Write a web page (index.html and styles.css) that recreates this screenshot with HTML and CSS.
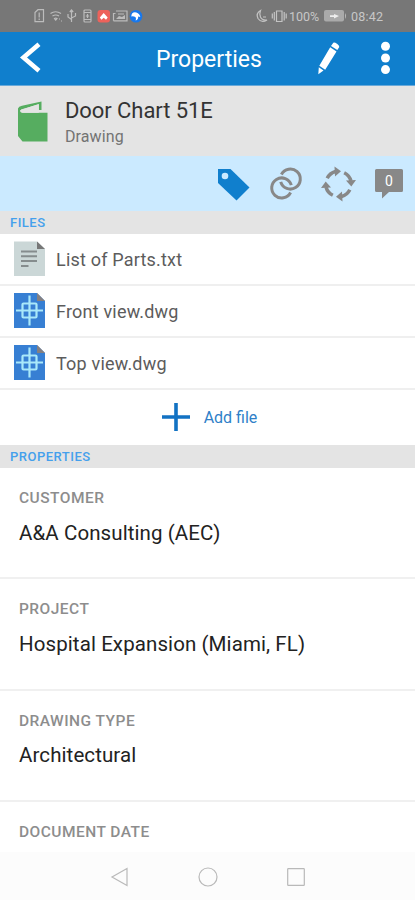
FILE: index.html
```html
<!DOCTYPE html>
<html lang="en">
<head>
<meta charset="utf-8">
<title>Properties</title>
<link rel="stylesheet" href="styles.css">
</head>
<body>
<div class="screen">
  <div class="status">
    <svg class="status-left" width="110" height="16" viewBox="0 0 110 16" fill="none" stroke="#bcbcbc" stroke-width="1.2">
      <path d="M1 4.500 4 1.700h5.500v12H1zM5.200 4.500v5M5.200 10.500v1.500"/>
      <path d="M16.500 5.500q5-3.500 10.500 0M18.500 8q3.200-2 6.500 0M20.500 10.500q1.200-1 2.500 0L21.700 12zM25 11h1M27 13h1"/>
      <path d="M37.500 2v12M35.800 4l1.700-2 1.700 2M34 6v3l3.500 2.500M41.500 5v3L37.500 10"/>
      <rect x="50" y="2" width="7" height="12" rx="1"/><path d="M50 4.500h7M50 11.500h7M53.500 6v4M51.800 8h3.400"/>
      <g stroke="none"><rect x="63.5" y="2" width="12.5" height="12.5" rx="3" fill="#ed625b"/><path d="M65.800 9.500 69.700 5l4 4.500-1.700 2.200-2.300-2-2.200 2z" fill="#fff"/></g>
      <path d="M79.500 12.800V5.500h2M82 3h11v9.800H79.500M84 6h6"/>
      <path d="M82 11l3-3 3 1 3-2v4z" fill="#bcbcbc" stroke="none"/>
      <g stroke="none"><circle cx="102" cy="8.2" r="6.3" fill="#1878ec"/><path d="M97.300 8.500q.3-5 5-4 3.500 1 4 4.500l-2.200-.5q.5 3-2.500 4 1-3-.8-3.800-1.500-.8-3.500-.2z" fill="#fff"/></g>
    </svg>
    <div class="status-right">
      <svg width="31" height="16" viewBox="0 0 31 16" fill="none" stroke="#c4c4c4" stroke-width="1.2"><path d="M4.500 2.600Q-.5 5.500 2 10.500q3.500 5 9 1.500-5 .6-6.500-3-1.200-3.500 0-6.400zM7 9h3"/><path d="M20.500 3h5.500v10.500h-5.500zM18.300 4v8.500M28.200 4v8.500M16.300 5.500v5M30.200 5.500v5"/></svg>
      <span class="percent">100%</span>
      <svg width="24" height="12" viewBox="0 0 24 12"><rect width="20" height="11.500" rx="2" fill="#aaa"/><path d="M21 3q2 2.700 0 6z" fill="#bbb"/><path d="M6 5.300h4V4l5 2-5 2.500V7H6z" fill="#eee"/></svg>
      <span class="clock">08:42</span>
    </div>
  </div>
  <header class="bar">
    <svg width="22" height="32" viewBox="0 0 22 32"><path d="M19 1.200 3.500 14.500 19 27.700" fill="none" stroke="#fff" stroke-width="4.600"/></svg>
    <h1>Properties</h1>
    <svg width="22" height="32" viewBox="0 0 22 32" fill="#fff"><path d="M13 2.900 15.300-.2q1-.7 4 1.100 2 1.300 2 3L19.300 7.100zM12.200 4.200l6.300 4.200L7.200 26.700 1.300 22.700zM.8 24.300l4.700 3.100L.3 31.200z"/></svg>
    <svg class="more" width="10" height="34" viewBox="0 0 10 34" fill="#fff"><circle cx="4.500" cy="4.300" r="4.500"/><circle cx="4.500" cy="16" r="4.500"/><circle cx="4.500" cy="27.600" r="4.500"/></svg>
  </header>
  <section class="object">
    <svg width="30" height="42" viewBox="0 0 30 42"><path d="M0 7.500V35l4.500 5.500H29.500V11.800H4Q1.800 11.500 2 9.200L20.800 3v6h2.700V.5L4 4.800Q.5 5.500 0 7.500z" fill="#56ad60"/><path d="M3 8.600 20.800 3.200V11.800H4.500Q2.500 11 3 8.600z" fill="#e4e4e4"/></svg>
    <div class="object-text"><h2>Door Chart 51E</h2><p>Drawing</p></div>
  </section>
  <div class="tools">
    <svg width="34" height="34" viewBox="0 0 34 34"><path d="M1 2h12.500L32.500 20.500 19.500 33.500 1 16z" fill="#107fcd"/><circle cx="8" cy="9" r="3.300" fill="#cbeaff"/></svg>
    <svg width="34" height="34" viewBox="0 0 34 34" fill="none" stroke="#888" stroke-width="3"><path d="M12.400 7.500A10 10 0 1 1 11.700 14.900"/><path d="M21.600 25.500A10 10 0 1 1 22.300 18.100"/></svg>
    <svg width="36" height="36" viewBox="0 0 36 36"><g id="arrow"><path d="M6.200 12.300A13 13 0 0 1 14.500 5.500" fill="none" stroke="#888" stroke-width="3.500"/><path d="M13.500.5 20 5.200 14 10.500z" fill="#888"/></g><use href="#arrow" transform="rotate(90 17.500 18)"/><use href="#arrow" transform="rotate(180 17.500 18)"/><use href="#arrow" transform="rotate(270 17.500 18)"/></svg>
    <div class="comment"><svg width="28" height="30" viewBox="0 0 28 30"><path d="M1.500 0h25Q28 0 28 1.500v20q0 1.500-1.500 1.500H14L7 29.500V23H1.500Q0 23 0 21.500v-20Q0 0 1.500 0z" fill="#888"/></svg><span>0</span></div>
  </div>
  <h3 class="section">FILES</h3>
  <div class="file">
    <svg width="31" height="35" viewBox="0 0 31 35"><path d="M0 .5h23l8 7.500v27H0z" fill="#cbd7d7"/><path d="M23 .5 31 8h-8z" fill="#777"/><path d="M7 10.500h16M7 15.200h16M7 20h16M7 25h7.500" stroke="#858c8d" stroke-width="2"/></svg>
    <span class="list">List of Parts.txt</span>
  </div>
  <div class="file">
    <svg width="31" height="35" viewBox="0 0 31 35"><g id="drawing"><path d="M0 0h23l8 8v27H0z" fill="#377fd3"/><path d="M23 0 31 8h-8z" fill="#858080"/><g fill="none" stroke="#a9e8fa" stroke-width="2.200"><path d="M15.500 2.500v30M2 17.500h27"/><rect x="8.500" y="10.500" width="14" height="14" rx="1"/></g></g></svg>
    <span>Front view.dwg</span>
  </div>
  <div class="file">
    <svg width="31" height="35" viewBox="0 0 31 35"><use href="#drawing"/></svg>
    <span>Top view.dwg</span>
  </div>
  <div class="add"><svg width="28" height="28" viewBox="0 0 28 28"><path d="M14 0v28M0 14h28" stroke="#1272c3" stroke-width="3.600"/></svg><span>Add file</span></div>
  <h3 class="section">PROPERTIES</h3>
  <dl>
    <div class="property"><dt>CUSTOMER</dt><dd>A&amp;A Consulting (AEC)</dd></div>
    <div class="property"><dt>PROJECT</dt><dd>Hospital Expansion (Miami, FL)</dd></div>
    <div class="property"><dt>DRAWING TYPE</dt><dd>Architectural</dd></div>
    <div class="property last"><dt>DOCUMENT DATE</dt></div>
  </dl>
  <nav>
    <svg width="20" height="20" viewBox="0 0 20 20"><path d="M17 1.500v17L2 10z"/></svg>
    <svg width="20" height="20" viewBox="0 0 20 20"><circle cx="10" cy="10" r="9"/></svg>
    <svg width="20" height="20" viewBox="0 0 20 20"><rect x="1.700" y="1.700" width="16.600" height="16.600" rx=".6"/></svg>
  </nav>
</div>
</body>
</html>
```
FILE: styles.css
```css
* { box-sizing: border-box; }
body { margin: 0; background: #fff; font-family: Roboto, "Liberation Sans", sans-serif; }
h1, h2, h3, p, dl, dt, dd { margin: 0; font-weight: 400; }
svg { display: block; flex: none; overflow: visible; }
span, h1, h2, h3, p, dt, dd { white-space: nowrap; }
.screen { width: 415px; height: 900px; display: flex; flex-direction: column; overflow: hidden; }
.screen > * { flex: none; }
.status { height: 32px; background: #777; display: flex; align-items: center; padding: 0 31px 0 34px; justify-content: space-between; color: #c7c7c7; }
.status-right { display: flex; align-items: center; font-size: 12.5px; }
.percent { width: 31px; margin: 0 4px 0 2px; }
.clock { margin-left: 3px; width: 33px; letter-spacing: .2px; }
.bar { height: 54px; background: #107fcd; border-bottom: 1px solid #69a9d9; display: flex; align-items: center; padding: 0 24px 0 20px; color: #fff; }
.bar h1 { font-size: 23px; line-height: 30px; margin: 2px 56px 0 114px; width: 106px; }
.more { margin-left: auto; }
.object { height: 70px; background: #e4e4e4; display: flex; padding: 15px 18px 0; }
.object-text { margin-left: 17px; }
.object h2 { font-size: 22px; line-height: 26px; margin-top: -3px; color: #333; letter-spacing: -.07px; }
.object p { font-size: 16px; line-height: 20px; margin-top: 3px; color: #737373; letter-spacing: .1px; }
.tools { height: 55px; background: #cbeaff; display: flex; justify-content: flex-end; align-items: center; gap: 18px; padding: 1px 12px 0 0; }
.comment { position: relative; }
.comment span { position: absolute; left: 0; top: 0; width: 28px; text-align: center; color: #fff; font-size: 14px; line-height: 25px; }
.section { height: 23px; background: #e4e4e4; color: #45a0ec; padding-left: 10px; font-size: 13px; line-height: 24px; font-weight: 500; letter-spacing: .5px; }
.file { height: 52px; border-bottom: 2px solid #efefef; padding: 0 14px 2px; display: flex; align-items: center; gap: 11px; color: #5c5c5c; font-size: 18px; letter-spacing: .2px; }
.file span { padding-top: 2px; }
.add { height: 55px; display: flex; align-items: center; justify-content: center; gap: 14px; padding: 0 0 1px 4px; font-size: 16px; color: #2f7fc8; }
.property { height: 111.4px; border-bottom: 2px solid #f0f0f0; padding: 18px 19px 0; }
.property.last { border: 0; height: 49px; }
dt { color: #8d8d8d; font-size: 15.5px; line-height: 24px; font-weight: 500; letter-spacing: .47px; }
dd { color: #222; font-size: 20.5px; line-height: 28px; margin-top: 8.5px; letter-spacing: .09px; }
nav { height: 48px; margin-top: auto; background: #fcfcfc; display: flex; justify-content: center; align-items: center; gap: 68px; fill: none; stroke: #b9b9b9; stroke-width: 1.2; padding-top: 2px; }
```
